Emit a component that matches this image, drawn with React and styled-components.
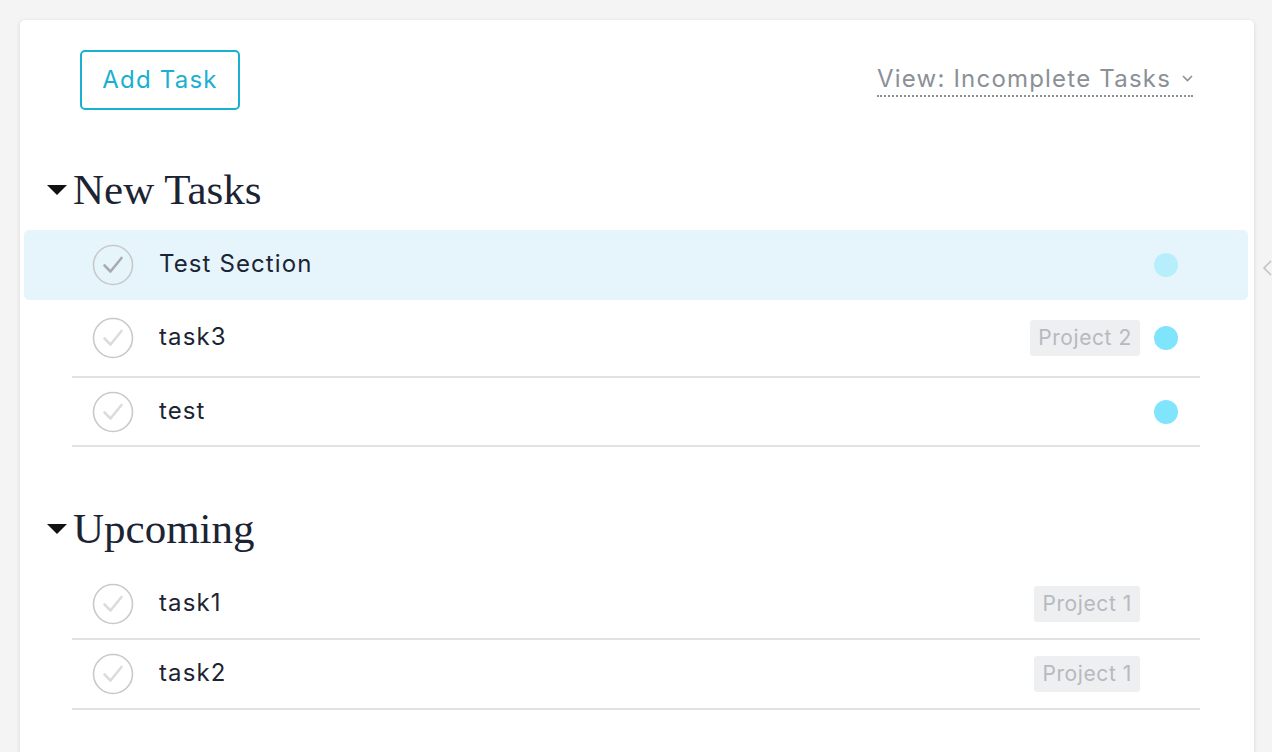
import React from 'react'
import styled, { createGlobalStyle } from 'styled-components'

const sections = [
  {
    title: 'New Tasks',
    tasks: [
      { name: 'Test Section', dot: true, active: true, h: 70 },
      { name: 'task3', project: 'Project 2', dot: true, h: 78 },
      { name: 'test', dot: true, h: 69 },
    ],
  },
  {
    title: 'Upcoming',
    tasks: [
      { name: 'task1', project: 'Project 1', h: 71 },
      { name: 'task2', project: 'Project 1', h: 70 },
    ],
  },
]

const Global = createGlobalStyle`
  html, body {
    margin: 0;
    padding: 0;
    background: #f4f4f4;
    font-family: Inter, "Open Sans", sans-serif;
    overflow: hidden;
  }
`

const Page = styled.div`
  display: flex;
  height: 752px;
  padding: 20px 0 0 20px;
  box-sizing: border-box;
`

const Card = styled.div`
  position: relative;
  width: 1234px;
  min-height: 760px;
  background: #fff;
  border-radius: 5px;
  box-shadow: 0 1px 4px rgba(0, 0, 0, 0.13);
  padding: 30px 6px 0 4px;
  box-sizing: border-box;
`

const Toolbar = styled.div`
  display: flex;
  align-items: center;
  justify-content: space-between;
  padding: 0 55px 0 56px;
`

const AddButton = styled.button`
  width: 160px;
  height: 60px;
  padding: 0 0 2px;
  border: 2px solid #1ab0d2;
  border-radius: 5px;
  background: #fff;
  color: #1ab0d2;
  font-family: Inter, sans-serif;
  font-size: 24px;
  letter-spacing: 1.2px;
  cursor: pointer;
`

const ViewSelect = styled.div`
  display: flex;
  align-items: center;
  gap: 11px;
  color: #8b9097;
  font-size: 24px;
  letter-spacing: 1.2px;
  line-height: 30px;
  padding-bottom: 1px;
  border-bottom: 2px dotted #8b9097;
  margin-top: 0;
`

const Section = styled.div`
  margin-top: ${p => p.$first ? '56px' : '58px'};
`

const Heading = styled.div`
  display: flex;
  align-items: center;
  gap: 6px;
  padding-left: 23px;
  margin-bottom: 16px;
  font-family: "Liberation Serif", serif;
  font-size: 43px;
  line-height: 48px;
  color: #1c2434;
`

const Row = styled.div`
  padding: 0 48px;
  border-radius: 5px;
  background: ${p => p.$active ? '#e6f5fb' : 'transparent'};
`

const RowInner = styled.div`
  display: flex;
  align-items: center;
  padding: 0 22px 0 20px;
  border-bottom: ${p => p.$active ? 'none' : '2px solid #e2e2e2'};
  box-sizing: border-box;
`

const Name = styled.div`
  flex: 1;
  margin-left: 25px;
  padding-bottom: 3px;
  font-size: 24px;
  letter-spacing: 1.1px;
  color: #1c2434;
`

const Tag = styled.div`
  height: 36px;
  line-height: 35px;
  padding: 0 8px;
  border-radius: 3px;
  background: #eeeff1;
  color: #b6b9be;
  font-size: 21px;
  letter-spacing: 0.6px;
`

const Dot = styled.div`
  width: 24px;
  height: 24px;
  margin-left: 14px;
  border-radius: 50%;
  background: ${p => p.$show ? (p.$active ? '#b6eefc' : '#80e4fd') : 'transparent'};
`

const SideToggle = styled.div`
  position: absolute;
  right: -18px;
  top: 240px;
  color: #c2c2c2;
`

function Check({ active }) {
  return (
    <svg width="42" height="42" viewBox="0 0 42 42">
      <circle cx="21" cy="21" r="19.5" fill="none" stroke="#c9c9cb" strokeWidth="1.6" />
      <path d="M12.5 21.5 L18.5 27.5 L29.5 14" fill="none" stroke={active ? '#a9abaf' : '#dcdcde'} strokeWidth="2.6" strokeLinecap="round" strokeLinejoin="round" />
    </svg>
  )
}

function Caret() {
  return (
    <svg width="20" height="10" viewBox="0 0 20 10">
      <path d="M0 0 L20 0 L10 10 Z" fill="#111" />
    </svg>
  )
}

export default function App() {
  return (
    <Page>
      <Global />
      <Card>
        <Toolbar>
          <AddButton>Add Task</AddButton>
          <ViewSelect>
            View: Incomplete Tasks
            <svg width="11" height="7" viewBox="0 0 11 7">
              <path d="M1 1 L5.5 5.5 L10 1" fill="none" stroke="#8b9097" strokeWidth="1.6" />
            </svg>
          </ViewSelect>
        </Toolbar>

        {sections.map((s, i) => (
          <Section key={s.title} $first={i === 0}>
            <Heading><Caret />{s.title}</Heading>
            {s.tasks.map(t => (
              <Row key={t.name} $active={t.active}>
                <RowInner $active={t.active} style={{ height: t.h }}>
                  <Check active={t.active} />
                  <Name>{t.name}</Name>
                  {t.project && <Tag>{t.project}</Tag>}
                  <Dot $show={t.dot} $active={t.active} />
                </RowInner>
              </Row>
            ))}
          </Section>
        ))}

        <SideToggle>
          <svg width="10" height="16" viewBox="0 0 10 16">
            <path d="M9 1 L2 8 L9 15" fill="none" stroke="#c2c2c2" strokeWidth="1.6" />
          </svg>
        </SideToggle>
      </Card>
    </Page>
  )
}
